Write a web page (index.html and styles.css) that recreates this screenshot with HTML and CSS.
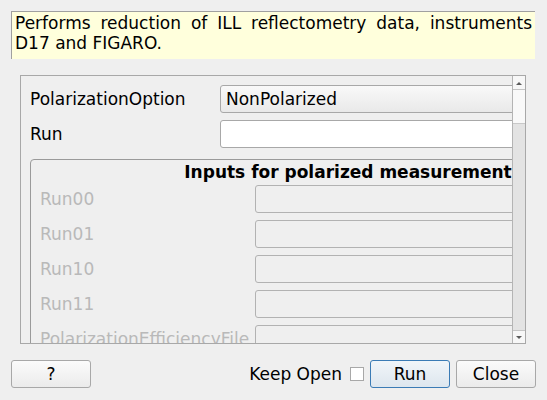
FILE: index.html
```html
<!DOCTYPE html>
<html>
<head>
<meta charset="utf-8">
<link rel="stylesheet" href="styles.css">
</head>
<body>
<div class="desc">Performs reduction of ILL reflectometry data, instruments D17 and FIGARO.</div>
<div class="frame">
  <div class="viewport">
    <div class="content">
      <div class="row">
        <span class="lbl">PolarizationOption</span>
        <div class="combo">NonPolarized</div>
      </div>
      <div class="row">
        <span class="lbl">Run</span>
        <div class="input"></div>
      </div>
      <div class="group">
        <div class="gtitle">Inputs for polarized measurement</div>
        <div class="grow"><span class="glbl">Run00</span><div class="ginput"></div></div>
        <div class="grow"><span class="glbl">Run01</span><div class="ginput"></div></div>
        <div class="grow"><span class="glbl">Run10</span><div class="ginput"></div></div>
        <div class="grow"><span class="glbl">Run11</span><div class="ginput"></div></div>
        <div class="grow"><span class="glbl">PolarizationEfficiencyFile</span><div class="ginput"></div></div>
      </div>
    </div>
  </div>
  <div class="sb">
    <div class="sb-btn"><svg width="12" height="14" viewBox="0 0 12 14"><path d="M3 9 L9 9 L6 6 Z" fill="#5a5a5a"/></svg></div>
    <div class="sb-handle"></div>
    <div class="sb-track"></div>
    <div class="sb-btn down"><svg width="12" height="13" viewBox="0 0 12 13"><path d="M3 5 L9 5 L6 8 Z" fill="#5a5a5a"/></svg></div>
  </div>
</div>
<div class="footer">
  <button class="btn">?</button>
  <div class="spacer"></div>
  <span class="keep">Keep Open</span>
  <span class="check"></span>
  <button class="btn default">Run</button>
  <button class="btn">Close</button>
</div>
</body>
</html>
```
FILE: styles.css
```css
html, body {
  margin: 0;
  padding: 0;
}
body {
  width: 547px;
  height: 400px;
  overflow: hidden;
  background: #efefef;
  font-family: "DejaVu Sans", sans-serif;
  font-size: 17px;
  color: #000;
}
.desc {
  margin: 11px 0 0 11px;
  width: 524px;
  height: 48px;
  box-sizing: border-box;
  border-top: 1px solid #a0a0a0;
  border-left: 1px solid #a0a0a0;
  background: #ffffdc;
  padding: 1px 3px 0 3px;
  line-height: 20px;
  text-align: justify;
}
.frame {
  margin: 16px 0 0 20px;
  width: 506px;
  height: 269px;
  box-sizing: border-box;
  border: 1px solid #a8a8a8;
  display: flex;
}
.viewport {
  width: 491px;
  overflow: hidden;
}
.content {
  width: 660px;
  padding: 9px 0 0 9px;
}
.row {
  display: flex;
  align-items: center;
  height: 28px;
  margin-bottom: 7px;
}
.lbl {
  width: 190px;
  flex: none;
}
.combo, .input {
  box-sizing: border-box;
  height: 28px;
  width: 420px;
  border: 1px solid #a8a8a8;
  border-radius: 3px;
  flex: none;
}
.combo {
  background: linear-gradient(#f9f9f9, #e9e9e9);
  padding-left: 5px;
  line-height: 26px;
}
.input {
  background: #fff;
}
.group {
  margin-top: 11px;
  width: 636px;
  box-sizing: border-box;
  border: 1px solid #9a9a9a;
  border-radius: 4px;
  padding: 0 9px 10px 9px;
}
.gtitle {
  height: 25px;
  line-height: 24px;
  font-weight: bold;
  text-align: center;
}
.grow {
  display: flex;
  align-items: center;
  height: 28px;
  margin-bottom: 7px;
}
.glbl {
  width: 215px;
  flex: none;
  color: #b9b9b9;
  white-space: nowrap;
}
.ginput {
  box-sizing: border-box;
  height: 28px;
  flex: 1;
  border: 1px solid #b2b2b2;
  border-radius: 3px;
  background: #efefef;
}
.sb {
  width: 13px;
  box-sizing: border-box;
  border-left: 1px solid #b4b4b4;
  display: flex;
  flex-direction: column;
  background: #e3e3e3;
}
.sb-btn {
  height: 14px;
  flex: none;
  background: #f7f7f7;
  border-bottom: 1px solid #c4c4c4;
  box-sizing: border-box;
  display: flex;
  justify-content: center;
}
.sb-btn.down {
  height: 13px;
  border-bottom: none;
  border-top: 1px solid #c4c4c4;
}
.sb-handle {
  height: 34px;
  flex: none;
  box-sizing: border-box;
  background: #f9f9f9;
  border-bottom: 1px solid #c8c8c8;
}
.sb-track {
  flex: 1;
}
.footer {
  margin-top: 16px;
  padding: 0 11px;
  display: flex;
  align-items: center;
  height: 28px;
}
.spacer {
  flex: 1;
}
.btn {
  width: 80px;
  height: 28px;
  box-sizing: border-box;
  border: 1px solid #a8a8a8;
  border-radius: 3px;
  background: linear-gradient(#fbfbfb, #ebebeb);
  font-family: "DejaVu Sans", sans-serif;
  font-size: 17px;
  color: #000;
  padding: 0;
  margin: 0;
}
.btn.default {
  border-color: #3b7bb5;
  background: linear-gradient(#f1f5f9, #dde6ee);
  margin-left: 6px;
  margin-right: 6px;
}
.keep {
  margin-right: 8px;
}
.check {
  width: 14px;
  height: 14px;
  box-sizing: border-box;
  border: 1px solid #a8a8a8;
  background: #fff;
}
```
